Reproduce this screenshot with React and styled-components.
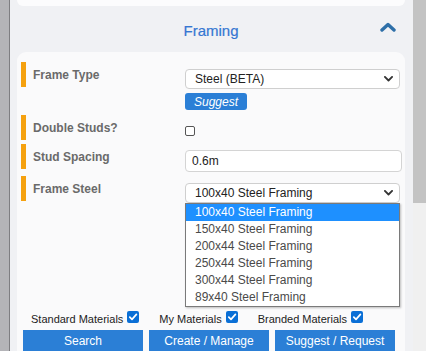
import React from "react";
import styled, { createGlobalStyle } from "styled-components";

const GlobalStyle = createGlobalStyle`
    html, body {
        margin: 0;
        padding: 0;
        background: #f0f1f4;
        font-family: "Liberation Sans", Arial, sans-serif;
        overflow: hidden;
    }
`;

const frameSteelOptions = [
    "100x40 Steel Framing",
    "150x40 Steel Framing",
    "200x44 Steel Framing",
    "250x44 Steel Framing",
    "300x44 Steel Framing",
    "89x40 Steel Framing",
];

function Chevron({ size = 9, color = "#333", weight = 2 }) {
    return (
        <svg width={size} height={size * 0.6} viewBox="0 0 10 6">
            <polyline points="1,1 5,5 9,1" fill="none" stroke={color} strokeWidth={weight} strokeLinecap="round" strokeLinejoin="round" />
        </svg>
    );
}

function CheckMark() {
    return (
        <svg width="10" height="10" viewBox="0 0 10 10">
            <polyline points="1.8,5.2 4,7.4 8.4,2.4" fill="none" stroke="#fff" strokeWidth="1.7" strokeLinecap="round" strokeLinejoin="round" />
        </svg>
    );
}

function App() {
    return (
        <>
            <GlobalStyle />
            <Window>
                <LeftStrip />
                <Panel>
                    <TopCard />
                    <Header>
                        <Title>Framing</Title>
                        <Collapse>
                            <svg width="16" height="10" viewBox="0 0 16 10">
                                <polyline points="2,8 8,2.5 14,8" fill="none" stroke="#2e6fa8" strokeWidth="3.4" strokeLinecap="round" strokeLinejoin="round" />
                            </svg>
                        </Collapse>
                    </Header>
                    <Card>
                        <Row>
                            <Label>Frame Type</Label>
                            <Field>
                                <Select>
                                    <span>Steel (BETA)</span>
                                    <Chevron />
                                </Select>
                                <SuggestButton>Suggest</SuggestButton>
                            </Field>
                        </Row>
                        <Row>
                            <Label>Double Studs?</Label>
                            <Field $pad={11}>
                                <EmptyBox />
                            </Field>
                        </Row>
                        <Row>
                            <Label>Stud Spacing</Label>
                            <Field $pad={6}>
                                <Input>0.6m</Input>
                            </Field>
                        </Row>
                        <Row>
                            <Label>Frame Steel</Label>
                            <Field>
                                <SelectWrap>
                                    <Select>
                                        <span>100x40 Steel Framing</span>
                                        <Chevron />
                                    </Select>
                                    <OptionList>
                                        {frameSteelOptions.map((o, i) => (
                                            <Option key={o} $active={i === 0}>{o}</Option>
                                        ))}
                                    </OptionList>
                                </SelectWrap>
                            </Field>
                        </Row>
                        <Filters>
                            <Filter>
                                Standard Materials <Checked><CheckMark /></Checked>
                            </Filter>
                            <Filter>
                                My Materials <Checked><CheckMark /></Checked>
                            </Filter>
                            <Filter>
                                Branded Materials <Checked><CheckMark /></Checked>
                            </Filter>
                        </Filters>
                        <Actions>
                            <ActionButton>Search</ActionButton>
                            <ActionButton>Create / Manage</ActionButton>
                            <ActionButton>Suggest / Request</ActionButton>
                        </Actions>
                    </Card>
                </Panel>
                <Scrollbar>
                    <Thumb />
                </Scrollbar>
            </Window>
        </>
    );
}

export default App;

const Window = styled.div`
    display: flex;
    width: 426px;
    height: 351px;
    overflow: hidden;
`;

const LeftStrip = styled.div`
    width: 9px;
    flex-shrink: 0;
    background: #b4b4b8;
    border-right: 1px solid #7e7e82;
`;

const Panel = styled.div`
    flex: 1;
    display: flex;
    flex-direction: column;
    padding: 0 8px 0 7px;
    background: #f0f1f4;
    overflow: hidden;
`;

const TopCard = styled.div`
    flex-shrink: 0;
    height: 6px;
    background: #fcfcfd;
    border-radius: 0 0 9px 9px;
`;

const Header = styled.div`
    position: relative;
    flex-shrink: 0;
    height: 46px;
    display: flex;
    align-items: center;
    justify-content: center;
`;

const Title = styled.div`
    color: #3577d2;
    font-size: 15px;
    margin-top: 3px;
    -webkit-text-stroke: 0.2px #3577d2;
`;

const Collapse = styled.div`
    position: absolute;
    right: 9px;
    top: 16px;
    display: flex;
`;

const Card = styled.div`
    flex: 1 0 auto;
    background: #fafafb;
    border-radius: 9px 9px 0 0;
    padding: 10px 3px 0 4px;
    display: flex;
    flex-direction: column;
`;

const Row = styled.div`
    display: grid;
    grid-template-columns: 164px 1fr;
    margin-bottom: 5px;
    &:nth-child(2) { margin-bottom: 4px; }
    &:nth-child(3) { margin-bottom: 4px; }
`;

const Label = styled.div`
    align-self: start;
    height: 25px;
    box-sizing: border-box;
    border-left: 5px solid #f5a10f;
    padding: 6px 0 0 7px;
    font-size: 12px;
    line-height: 14px;
    font-weight: bold;
    color: #6a6a6a;
`;

const Field = styled.div`
    padding-top: ${(p) => p.$pad ?? 7}px;
    display: flex;
    flex-direction: column;
    align-items: flex-start;
`;

const Select = styled.div`
    width: 215px;
    height: 20px;
    box-sizing: border-box;
    border: 1px solid #cfcfcf;
    border-radius: 4px;
    background: #fff;
    display: flex;
    align-items: center;
    justify-content: space-between;
    padding: 0 6px 0 9px;
    font-size: 12px;
    color: #222;
`;

const SelectWrap = styled.div`
    position: relative;
`;

const SuggestButton = styled.button`
    margin-top: 4px;
    height: 17px;
    width: 62px;
    padding: 0;
    border: none;
    border-radius: 3px;
    background: #2b7fd6;
    color: #fff;
    font-family: "Liberation Sans", Arial, sans-serif;
    font-style: italic;
    font-size: 12px;
`;

const EmptyBox = styled.div`
    width: 10px;
    height: 10px;
    box-sizing: border-box;
    border: 1px solid #555;
    border-radius: 2px;
    background: #fff;
`;

const Input = styled.div`
    width: 217px;
    height: 22px;
    box-sizing: border-box;
    border: 1px solid #d4d4d4;
    border-radius: 4px;
    background: #fff;
    padding: 0 6px;
    display: flex;
    align-items: center;
    font-size: 12px;
    color: #222;
`;

const OptionList = styled.div`
    position: absolute;
    top: 20px;
    left: 0;
    width: 215px;
    box-sizing: border-box;
    background: #fff;
    border: 1px solid #7a7a7a;
    box-shadow: 1px 1px 2px rgba(0, 0, 0, 0.25);
    z-index: 2;
`;

const Option = styled.div`
    height: 17px;
    line-height: 17px;
    padding-left: 9px;
    font-size: 12px;
    color: ${(p) => (p.$active ? "#fff" : "#4a4a4a")};
    background: ${(p) => (p.$active ? "#1e90ff" : "transparent")};
`;

const Filters = styled.div`
    margin-top: 103px;
    display: flex;
    gap: 20px;
    padding-left: 10px;
    height: 16px;
    align-items: center;
`;

const Filter = styled.div`
    display: flex;
    align-items: center;
    gap: 4px;
    font-size: 11px;
    color: #222;
`;

const Checked = styled.span`
    width: 12px;
    height: 12px;
    border-radius: 2px;
    background: #0a6fd6;
    display: inline-flex;
    align-items: center;
    justify-content: center;
    margin-top: -4px;
`;

const Actions = styled.div`
    margin-top: 3px;
    display: flex;
    gap: 6px;
    padding-left: 2px;
`;

const ActionButton = styled.button`
    width: 120px;
    height: 22px;
    padding: 0;
    border: none;
    background: #2b7fd6;
    color: #fff;
    font-family: "Liberation Sans", Arial, sans-serif;
    font-size: 12px;
`;

const Scrollbar = styled.div`
    width: 13px;
    flex-shrink: 0;
    background: #f0f0f0;
`;

const Thumb = styled.div`
    height: 203px;
    background: #c3c3c3;
`;
